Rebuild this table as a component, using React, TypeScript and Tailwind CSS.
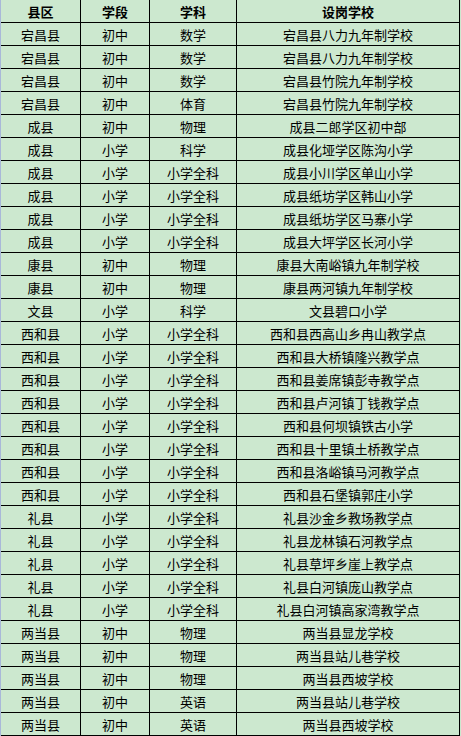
const rows: [string, string, string, string][] = [
  ["宕昌县", "初中", "数学", "宕昌县八力九年制学校"],
  ["宕昌县", "初中", "数学", "宕昌县八力九年制学校"],
  ["宕昌县", "初中", "数学", "宕昌县竹院九年制学校"],
  ["宕昌县", "初中", "体育", "宕昌县竹院九年制学校"],
  ["成县", "初中", "物理", "成县二郎学区初中部"],
  ["成县", "小学", "科学", "成县化垭学区陈沟小学"],
  ["成县", "小学", "小学全科", "成县小川学区单山小学"],
  ["成县", "小学", "小学全科", "成县纸坊学区韩山小学"],
  ["成县", "小学", "小学全科", "成县纸坊学区马寨小学"],
  ["成县", "小学", "小学全科", "成县大坪学区长河小学"],
  ["康县", "初中", "物理", "康县大南峪镇九年制学校"],
  ["康县", "初中", "物理", "康县两河镇九年制学校"],
  ["文县", "小学", "科学", "文县碧口小学"],
  ["西和县", "小学", "小学全科", "西和县西高山乡冉山教学点"],
  ["西和县", "小学", "小学全科", "西和县大桥镇隆兴教学点"],
  ["西和县", "小学", "小学全科", "西和县姜席镇彭寺教学点"],
  ["西和县", "小学", "小学全科", "西和县卢河镇丁钱教学点"],
  ["西和县", "小学", "小学全科", "西和县何坝镇铁古小学"],
  ["西和县", "小学", "小学全科", "西和县十里镇土桥教学点"],
  ["西和县", "小学", "小学全科", "西和县洛峪镇马河教学点"],
  ["西和县", "小学", "小学全科", "西和县石堡镇郭庄小学"],
  ["礼县", "小学", "小学全科", "礼县沙金乡教场教学点"],
  ["礼县", "小学", "小学全科", "礼县龙林镇石河教学点"],
  ["礼县", "小学", "小学全科", "礼县草坪乡崖上教学点"],
  ["礼县", "小学", "小学全科", "礼县白河镇庞山教学点"],
  ["礼县", "小学", "小学全科", "礼县白河镇高家湾教学点"],
  ["两当县", "初中", "物理", "两当县显龙学校"],
  ["两当县", "初中", "物理", "两当县站儿巷学校"],
  ["两当县", "初中", "物理", "两当县西坡学校"],
  ["两当县", "初中", "英语", "两当县站儿巷学校"],
  ["两当县", "初中", "英语", "两当县西坡学校"],
];

const Row = ({ cells, bold }: { cells: string[]; bold?: boolean }) => (
  <div className={`flex h-[23px] border-b border-black ${bold ? "font-bold" : ""}`}>
    <div className="w-[80px] border-r border-black flex items-center justify-center">{cells[0]}</div>
    <div className="w-[69px] border-r border-black flex items-center justify-center">{cells[1]}</div>
    <div className="w-[87px] border-r border-black flex items-center justify-center">{cells[2]}</div>
    <div className="w-[223px] border-r border-black flex items-center justify-center">{cells[3]}</div>
  </div>
);

export default function App() {
  return (
    <div
      className="w-[461px] h-[736px] overflow-hidden bg-[#cce8cf] text-black text-[13px] leading-none flex"
      style={{ fontFamily: '"Noto Sans CJK SC", "Noto Sans", sans-serif' }}
    >
      <div className="w-px bg-[#a9b8d9]" />
      <div className="w-[459px]">
        <Row cells={["县区", "学段", "学科", "设岗学校"]} bold />
        {rows.map((r, i) => (
          <Row key={i} cells={r} />
        ))}
      </div>
    </div>
  );
}
